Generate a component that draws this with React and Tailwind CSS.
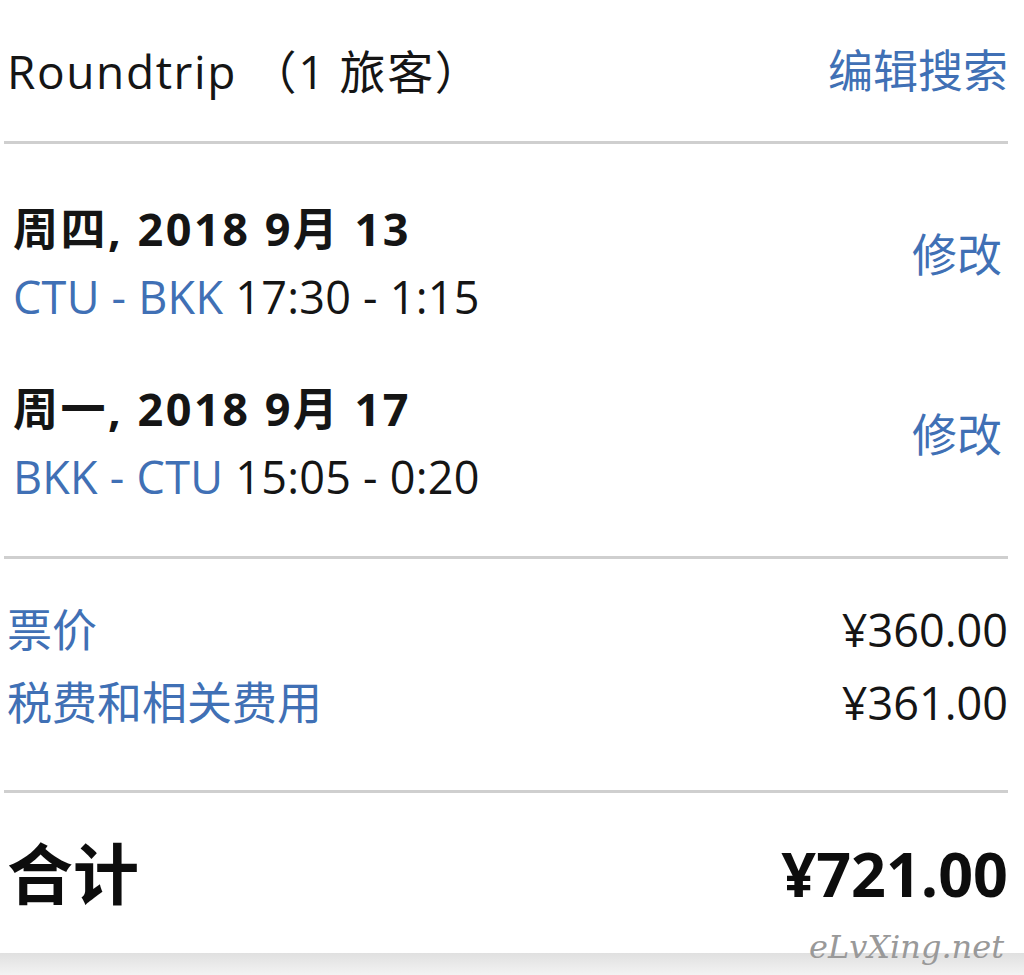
export default function App() {
  const font = { fontFamily: '"Open Sans", "Noto Sans CJK SC", sans-serif' };
  return (
    <div className="relative w-[1024px] h-[975px] bg-white overflow-hidden text-[#151515]" style={font}>
      <div className="mx-[4px] w-[1004px]">
        <div className="h-[141px] flex items-center justify-between pl-[3px] pr-[0px]">
          <span className="text-[46px] leading-none tracking-[1.6px]">Roundtrip （1 旅客）</span>
          <span className="text-[45px] leading-none text-[#4070b5]">编辑搜索</span>
        </div>
        <div className="h-[3px] bg-[#cfcfcf]" />

        <div className="pt-[51px] pb-[45px] pl-[9px] pr-[6px] flex flex-col gap-[44px]">
          <div className="flex items-center justify-between">
            <div className="flex flex-col">
              <div className="h-[68px] leading-[68px] text-[45px] font-bold tracking-[2.5px]">周四, 2018 9月 13</div>
              <div className="h-[68px] leading-[68px] text-[45px] tracking-[0.25px]">
                <span className="text-[#4070b5]">CTU - BKK</span> 17:30 - 1:15
              </div>
            </div>
            <span className="text-[45px] leading-none text-[#4070b5] mb-[18px]">修改</span>
          </div>
          <div className="flex items-center justify-between">
            <div className="flex flex-col">
              <div className="h-[68px] leading-[68px] text-[45px] font-bold tracking-[2.5px]">周一, 2018 9月 17</div>
              <div className="h-[68px] leading-[68px] text-[45px] tracking-[0.25px]">
                <span className="text-[#4070b5]">BKK - CTU</span> 15:05 - 0:20
              </div>
            </div>
            <span className="text-[45px] leading-none text-[#4070b5] mb-[18px]">修改</span>
          </div>
        </div>
        <div className="h-[3px] bg-[#cfcfcf]" />

        <div className="pt-[34px] pb-[51px] pl-[3px] flex flex-col">
          <div className="h-[73px] flex items-center justify-between text-[45px]">
            <span className="text-[#4070b5]">票价</span>
            <span>¥360.00</span>
          </div>
          <div className="h-[73px] flex items-center justify-between text-[45px]">
            <span className="text-[#4070b5]">税费和相关费用</span>
            <span>¥361.00</span>
          </div>
        </div>
        <div className="h-[3px] bg-[#cfcfcf]" />

        <div className="h-[160px] flex items-center justify-between pl-[3px] font-bold leading-none text-[#0d0d0d]">
          <span className="text-[66px]">合计</span>
          <span className="text-[61px]">¥721.00</span>
        </div>
      </div>
      <div className="h-[23px] bg-gradient-to-b from-[#e0e0e0] to-[#f4f4f4]" />
      <div
        className="absolute right-[20px] bottom-[12px] text-[32px] italic text-[#999999] leading-none"
        style={{ fontFamily: '"DejaVu Serif", serif' }}
      >
        eLvXing.net
      </div>
    </div>
  );
}
